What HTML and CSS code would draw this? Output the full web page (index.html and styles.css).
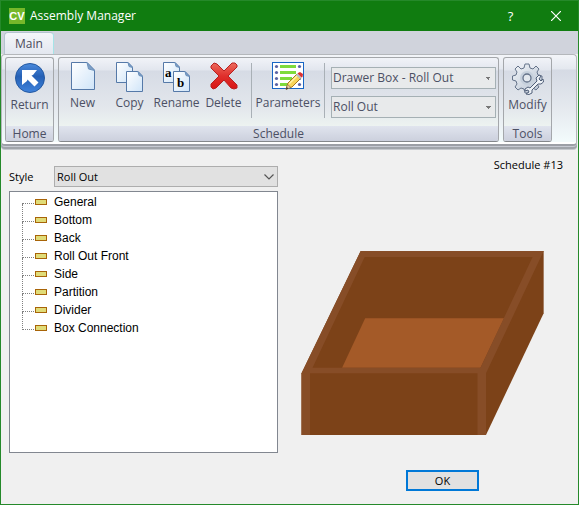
FILE: index.html
```html
<!DOCTYPE html>
<html lang="en">
<head>
<meta charset="utf-8">
<title>Assembly Manager</title>
<link rel="stylesheet" href="styles.css">
</head>
<body>
<div class="window">
  <header class="titlebar">
    <span class="logo">CV</span>
    <h1 class="title">Assembly Manager</h1>
    <button class="caption-btn" type="button">?</button>
    <button class="caption-btn" type="button" aria-label="Close">
      <svg width="10" height="10" viewBox="0 0 10 10"><path d="M0 0L10 10M10 0L0 10" stroke="#fff" stroke-width="1.2"/></svg>
    </button>
  </header>

  <nav class="tabs"><button class="tab" type="button">Main</button></nav>

  <div class="ribbon">
    <section class="group">
      <div class="group-body">
        <button class="tool tool-wide" type="button">
          <svg width="30" height="30" viewBox="0 0 30 30">
            <defs><linearGradient id="disc" x1="0" y1="0" x2="0" y2="1"><stop offset="0" stop-color="#4a8add"/><stop offset=".45" stop-color="#2560b5"/><stop offset="1" stop-color="#3f83dc"/></linearGradient></defs>
            <circle cx="15" cy="15" r="14.5" fill="url(#disc)" stroke="#2458a0"/>
            <path d="M7 7H22L18 12L16.500 12.500L23.500 19.500L19.500 23.500L12.500 16.500L12 18L7 22Z" fill="#fff"/>
          </svg>
          <span>Return</span>
        </button>
      </div>
      <h2 class="group-name">Home</h2>
    </section>

    <section class="group">
      <div class="group-body">
        <button class="tool" type="button">
          <svg width="24" height="28" viewBox="0 0 24 28">
            <defs><linearGradient id="page" x1="0" y1="0" x2="1" y2="1"><stop offset="0" stop-color="#fff"/><stop offset="1" stop-color="#cfe4f8"/></linearGradient></defs>
            <path d="M.5 .5H16L23.500 8V27.500H.5Z" fill="url(#page)" stroke="#5579a8"/>
            <path d="M16 .5L17.500 7L23.500 8.500Z" fill="#7fa0c6" stroke="#6d92bd"/>
          </svg>
          <span>New</span>
        </button>
        <button class="tool" type="button">
          <svg width="28" height="30" viewBox="0 0 28 30">
            <path d="M.5 .5H12L16.500 5V20.500H.5Z" fill="url(#page)" stroke="#5579a8"/>
            <path d="M12 .5L13 4.500L16.500 5.500Z" fill="#7fa0c6" stroke="#6d92bd"/>
            <path d="M10.500 9.500H22L26.500 14V29.500H10.500Z" fill="url(#page)" stroke="#5579a8"/>
            <path d="M22 9.500L23 13.500L26.500 14.500Z" fill="#7fa0c6" stroke="#6d92bd"/>
          </svg>
          <span>Copy</span>
        </button>
        <button class="tool" type="button">
          <svg width="28" height="30" viewBox="0 0 28 30">
            <path d="M.5 .5H12L16.500 5V20.500H.5Z" fill="url(#page)" stroke="#5579a8"/>
            <path d="M12 .5L13 4.500L16.500 5.500Z" fill="#7fa0c6" stroke="#6d92bd"/>
            <path d="M10.500 9.500H22L26.500 14V29.500H10.500Z" fill="url(#page)" stroke="#5579a8"/>
            <path d="M22 9.500L23 13.500L26.500 14.500Z" fill="#7fa0c6" stroke="#6d92bd"/>
            <text class="glyph" x="2" y="15">a</text>
            <text class="glyph" x="14" y="25">b</text>
          </svg>
          <span>Rename</span>
        </button>
        <button class="tool" type="button">
          <svg width="28" height="28" viewBox="0 0 28 28">
            <defs><linearGradient id="cross" x1="0" y1="0" x2="0" y2="1"><stop offset="0" stop-color="#ec6a5c"/><stop offset=".5" stop-color="#e0302c"/><stop offset="1" stop-color="#d81414"/></linearGradient></defs>
            <path d="M1 4L4 1L7 2L14 9L22 1L25 1L27 3L27 5L18 14L27 23L27 26L24 27L21 26L14 18L6 26L3 27L1 25L1 22L9 14L1 6Z" fill="url(#cross)" stroke="#b82020"/>
          </svg>
          <span>Delete</span>
        </button>
        <hr class="divider">
        <button class="tool tool-long" type="button">
          <svg width="32" height="28" viewBox="0 0 32 28">
            <rect x=".5" y=".5" width="31" height="26" fill="#fff" stroke="#1765c4"/>
            <path d="M8 4.500H24M8 10.500H24M8 16.500H20M8 22.500H16" stroke="#7edb3c" stroke-width="3"/>
            <g fill="#5a62a4"><circle cx="4.500" cy="4.500" r="1.600"/><circle cx="4.500" cy="10.500" r="1.600"/><circle cx="4.500" cy="16.500" r="1.600"/><circle cx="4.500" cy="22.500" r="1.600"/><circle cx="27.500" cy="4.500" r="1.600"/><circle cx="27.500" cy="16.500" r="1.600"/><circle cx="27.500" cy="22.500" r="1.600"/></g>
            <path d="M14 27L16 21L25 12L29 16L20 25Z" fill="#f8d458" stroke="#a8781c"/>
            <path d="M17 22L26 13" stroke="#fff2a8" stroke-width="1.500"/>
            <path d="M14 27.500L15.500 22.500L19 25.500Z" fill="#e8c9a0" stroke="#8a6a40" stroke-width=".6"/>
            <path d="M14 27.500L14.700 25L16.500 26.500Z" fill="#333"/>
            <path d="M24 13L28 17L29.500 15.500L25.500 11.500Z" fill="#b9bec9"/>
            <path d="M26 11L28 10L31 12L30.500 15L29.500 15.500L25.500 11.500Z" fill="#dc3030"/>
          </svg>
          <span>Parameters</span>
        </button>
        <hr class="divider">
        <div class="picks">
          <select class="pick" aria-label="Schedule type"><option>Drawer Box - Roll Out</option></select>
          <select class="pick" aria-label="Schedule"><option>Roll Out</option></select>
        </div>
      </div>
      <h2 class="group-name">Schedule</h2>
    </section>

    <section class="group">
      <div class="group-body">
        <button class="tool tool-wide" type="button">
          <svg width="32" height="32" viewBox="0 0 32 32">
            <defs><linearGradient id="steel" x1="0" y1="0" x2="1" y2="1"><stop offset="0" stop-color="#f2f5f9"/><stop offset="1" stop-color="#b5c0cf"/></linearGradient></defs>
            <path d="M13 1H17L18 5L21 6L24 3L27 6L25 9L26 12L30 13V17L26 18L25 21L27 24L24 27L21 25L18 26L17 30H13L12 26L9 25L6 27L3 24L5 21L4 18L0.500 17V13L4 12L5 9L3 6L6 3L9 6L12 5Z" fill="url(#steel)" stroke="#65738a" stroke-linejoin="round"/>
            <circle cx="15" cy="15" r="7" fill="#c6d0dc"/>
            <circle cx="15" cy="15" r="4" fill="#e3e8ee" stroke="#65738a" stroke-width="1.300"/>
            <path d="M13 26L16 24L18 25L25 18L24 15L27 12L29 13L27 16L29 18L31 16L31.500 19L29 21L26 21L20 27L20 30L17 31.500L14 31L17 29L16 27L13 28Z" fill="#edf1f6" stroke="#505f78" stroke-linejoin="round"/>
          </svg>
          <span>Modify</span>
        </button>
      </div>
      <h2 class="group-name">Tools</h2>
    </section>
  </div>

  <main class="content">
    <div class="left">
      <div class="style-row">
        <label for="style">Style</label>
        <div class="combo">
          <select id="style"><option>Roll Out</option></select>
          <svg class="chevron" width="10" height="6" viewBox="0 0 10 6"><path d="M.5 .5L5 5L9.500 .5" fill="none" stroke="#555" stroke-width="1.200"/></svg>
        </div>
      </div>
      <ul class="tree">
        <li>General</li>
        <li>Bottom</li>
        <li>Back</li>
        <li>Roll Out Front</li>
        <li>Side</li>
        <li>Partition</li>
        <li>Divider</li>
        <li>Box Connection</li>
      </ul>
    </div>
    <div class="right">
      <p class="schedule">Schedule #13</p>
      <svg class="drawer" viewBox="301 250 243 186" role="img" aria-label="Roll out drawer box">
        <path d="M360.500 251H543V313L485.500 434.500H301.500V373Z" fill="#7c4218"/>
        <path d="M365 318H503.500L480 367.500H342Z" fill="#a45a28"/>
        <path fill-rule="evenodd" d="M360.500 251H543L485.500 373V434.500H477V373H310V434.500H301.500V373ZM364.500 257L312.500 367.500H480L532 257Z" fill="#874d27"/>
      </svg>
      <button class="ok" type="button">OK</button>
    </div>
  </main>
</div>
</body>
</html>
```
FILE: styles.css
```css
*, *::before, *::after { box-sizing: border-box; }

body {
  margin: 0;
  font: 11px/14px "Open Sans", "Noto Sans", sans-serif;
  color: #000;
}

button, select { font: inherit; color: inherit; margin: 0; }
h1, h2, p, ul { margin: 0; padding: 0; font-weight: normal; }

.window {
  min-height: 100vh;
  display: flex;
  flex-direction: column;
  border: 1px solid #25892a;
  background: #f0f0f0;
}

.titlebar {
  display: flex;
  align-items: center;
  height: 30px;
  padding-left: 8px;
  background: #107c10;
  color: #fff;
}

.logo {
  width: 16px;
  height: 16px;
  margin-right: 5px;
  background: #76b82a;
  font: bold 11px/16px "Liberation Sans", sans-serif;
  text-align: center;
}

.title { flex: 1; font-size: 12px; line-height: 16px; }

.caption-btn {
  width: 45px;
  height: 30px;
  padding: 0;
  border: 0;
  background: none;
  font-size: 13px;
}

.caption-btn svg { display: block; margin: 0 auto; }

.tabs {
  height: 23px;
  padding: 1px 3px 0;
  background: #d0d3dc;
}

.tab {
  width: 50px;
  height: 22px;
  padding: 0;
  border: 1px solid #b4c4cf;
  border-right-color: #a5e4e8;
  border-bottom: 0;
  border-radius: 4px 4px 0 0;
  background: linear-gradient(#f4f6f9, #e3e7f0);
  color: #4a4a5a;
  font-size: 12px;
}

.ribbon {
  display: flex;
  gap: 4px;
  padding: 2px 3px;
  margin-right: 1px;
  border: 1px solid #b4b7bb;
  border-bottom: 2px solid #9c9fa6;
  border-radius: 4px;
  background: linear-gradient(#f3f5f9 0, #e4e8ef 14px, #d5dae4 15px, #e6eaef 55px, #f2fafb 85px);
  box-shadow: inset 0 -2px #fff, 0 1px #c7cad3, 0 3px #a0a4aa, 0 4px #c5c8cd;
  color: #4c5064;
  font-size: 12px;
}

.group {
  display: flex;
  flex-direction: column;
  height: 85px;
  border: 1px solid #a4a7ab;
  border-bottom-color: #84878b;
  border-radius: 3px;
  background: linear-gradient(#f1f3f8 0, #e2e6ee 12px, #d6dbe5 13px, #e3e7ec 50px, #edf3f1 68px);
  overflow: hidden;
}

.group-body { display: flex; flex: 1; }

.group-name {
  height: 15px;
  font-size: 12px;
  line-height: 16px;
  text-align: center;
  background: linear-gradient(#e0e4ee, #ccd0dd);
}

.tool {
  display: flex;
  flex-direction: column;
  align-items: center;
  justify-content: space-between;
  width: 47px;
  height: 49px;
  margin-top: 4px;
  padding: 0;
  border: 0;
  background: none;
  line-height: 16px;
}

.tool-wide { height: 50px; margin-top: 5px; }
.tool-long { width: 72px; }

.glyph { font: bold 13px "Liberation Serif", serif; fill: #000; }

.divider {
  width: 1px;
  height: 55px;
  margin: 5px 0 0;
  border: 0;
  background: #a9b0b6;
}

.tool + .divider { margin-left: 4px; }
.tool-long + .divider { margin-left: 0; }

.picks {
  display: flex;
  flex-direction: column;
  gap: 7px;
  padding: 9px 2px 0 6px;
}

.pick {
  width: 165px;
  height: 22px;
  padding: 0 1px;
  border: 1px solid #a5b0b4;
  border-radius: 0;
  appearance: none;
  background: conic-gradient(from -45deg at 50% 100%, #777 90deg, transparent 0) right 4px top 9px / 6px 3px no-repeat #e8eaeb;
}

.content {
  display: grid;
  grid-template-columns: 269fr 262fr;
  gap: 23px;
  flex: 1;
  padding: 20px 15px 13px 8px;
}

.left { display: flex; flex-direction: column; gap: 4px; padding-bottom: 38px; }

.style-row { display: flex; align-items: center; }
.style-row label { width: 45px; }

.combo { position: relative; flex: 1; }

.combo select {
  display: block;
  width: 100%;
  height: 21px;
  padding: 0 2px;
  border: 1px solid #adadad;
  border-radius: 0;
  appearance: none;
  background: #e1e1e1;
}

.chevron { position: absolute; right: 4px; top: 8px; pointer-events: none; }

.tree {
  flex: 1;
  padding: 1px 12px;
  border: 1px solid #828790;
  background: #fff;
  list-style: none;
  font: 12px/18px "Liberation Sans", sans-serif;
}

.tree li {
  position: relative;
  display: flex;
  align-items: center;
  gap: 7px;
  height: 18px;
}

.tree li::before {
  content: "";
  width: 12px;
  height: 6px;
  margin-left: 13px;
  border: 1px solid #a86408;
  background: #e0dc78;
}

/* dotted connector lines of the tree */
.tree li::after {
  content: "";
  position: absolute;
  left: 0;
  top: -7px;
  width: 12px;
  height: 18px;
  border: dotted #808080;
  border-width: 0 0 1px 1px;
}

.tree li:first-child::after { top: 10px; height: 1px; border-left: 0; }

.right { display: flex; flex-direction: column; }

.schedule { margin-top: -8px; line-height: 14px; text-align: right; }

.drawer { display: block; width: 93%; margin-top: 78px; }

.ok {
  width: 73px;
  height: 21px;
  margin: auto auto 0 105px;
  padding: 0;
  border: 2px solid #0078d7;
  background: #e1e1e1;
}
```
